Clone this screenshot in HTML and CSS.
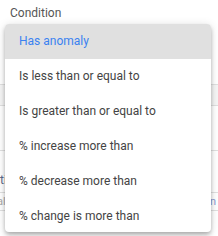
FILE: index.html
```html
<!DOCTYPE html>
<html>
<head>
  <title>Condition</title>
  <meta name="viewport" content="width=device-width, initial-scale=1.0">
  <link rel="stylesheet" href="styles.css">
</head>
<body>
  <div class="wrap">
    <div class="label">Condition</div>

    <!-- form behind the open menu -->
    <div class="bg">
      <div class="bg-head"></div>
      <div class="bg-row"></div>
      <div class="bg-label"><span>Action</span></div>
      <div class="bg-input"><span class="ph">alert</span><span class="ph-r">n</span></div>
    </div>

    <!-- dropdown menu -->
    <ul class="menu">
      <li class="item selected">Has anomaly</li>
      <li class="item">Is less than or equal to</li>
      <li class="item">Is greater than or equal to</li>
      <li class="item">% increase more than</li>
      <li class="item">% decrease more than</li>
      <li class="item">% change is more than</li>
    </ul>
  </div>
</body>
</html>
```

FILE: styles.css
```css
body {
  margin: 0;
  background: #fff;
  font-family: Roboto, "Liberation Sans", sans-serif;
  color: #555;
  overflow: hidden;
}
.wrap {
  position: relative;
  width: 218px;
  height: 236px;
  padding-top: 6px;
  box-sizing: border-box;
}
.label {
  padding-left: 10px;
  font-size: 12px;
  line-height: 14px;
  color: #555;
}
.bg {
  margin-top: 64px;
}
.bg-head {
  height: 20px;
  background: #f5f5f5;
  border-top: 1px solid #e0e0e0;
  border-bottom: 1px solid #e0e0e0;
}
.bg-row {
  height: 44px;
  border-bottom: 1px solid #e0e0e0;
}
.bg-label {
  height: 41px;
  display: flex;
  align-items: flex-end;
  font-size: 12px;
  line-height: 16px;
  color: #5a6a8a;
}
.bg-label span {
  margin-left: -14px;
  padding-bottom: 4px;
}
.bg-input {
  height: 17px;
  border-top: 1px solid #e0e0e0;
  border-bottom: 1px solid #e0e0e0;
  display: flex;
  justify-content: space-between;
  font-size: 11px;
  line-height: 17px;
  color: #aaa;
}
.ph {
  margin-left: -3px;
}
.ph-r {
  margin-right: 2px;
  color: #8a9ad0;
}
.menu {
  position: absolute;
  left: 5px;
  top: 24px;
  width: 206px;
  height: 208px;
  margin: 0;
  padding: 0;
  list-style: none;
  background: #fff;
  border-radius: 4px;
  overflow: hidden;
  box-shadow: 0 2px 4px -1px rgba(0,0,0,0.2), 0 4px 5px rgba(0,0,0,0.14), 0 1px 10px rgba(0,0,0,0.12);
}
.item {
  height: 35px;
  line-height: 35px;
  padding-left: 14px;
  font-size: 12px;
  color: #444;
}
.item.selected {
  background: #e0e0e0;
  color: #3b82f0;
}
```
